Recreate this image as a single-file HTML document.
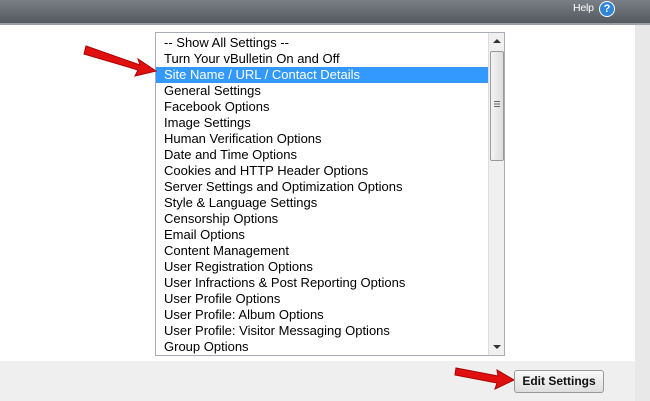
<!DOCTYPE html>
<html><head><style>
body{margin:0;width:650px;height:401px;overflow:hidden;background:#fff;font-family:"Liberation Sans",Arial,sans-serif;position:relative}
.hdr{position:absolute;left:0;top:0;width:650px;height:23px;background:linear-gradient(#7a7e85,#54585f)}
.hl{position:absolute;left:0;top:23px;width:650px;height:2px;background:#9a9ea5}
.help{position:absolute;left:573px;top:2px;color:#fff;font-size:10.5px;letter-spacing:-0.2px}
.q{position:absolute;left:599px;top:1px;width:16px;height:16px;border-radius:50%;background:#2f86d6;border:1px solid #fff;box-sizing:border-box;color:#fff;font-weight:bold;font-size:11px;text-align:center;line-height:14px}
.rs{position:absolute;left:635px;top:25px;width:15px;height:376px;background:#e8e8e8}
.ft{position:absolute;left:0;top:361px;width:635px;height:40px;background:#efefef}
.lb{position:absolute;left:155px;top:32px;width:348px;height:322px;border:1px solid #a8acb3;background:#fff;overflow:hidden}
.it{height:16px;line-height:16px;font-size:13px;padding-left:8px;color:#000;white-space:nowrap}
.sel{background:#3399ff;color:#fff}
.items{position:absolute;left:0;top:2px;width:332px}
.sb{position:absolute;left:332px;top:0;width:16px;height:322px;background:#f0f0f0;border-left:1px solid #ddd}
.th{position:absolute;left:1px;top:18px;width:12px;height:108px;border:1px solid #999;border-radius:2px;background:linear-gradient(90deg,#f4f4f4,#dcdcdc)}
.btn{position:absolute;left:514px;top:370px;width:90px;height:23px;border:1px solid #999;border-radius:3px;box-sizing:border-box;background:linear-gradient(#fafafa,#dedede);font-size:12px;font-weight:bold;color:#111;text-align:center;line-height:21px}
</style></head><body>
<div class="hdr"></div><div class="hl"></div>
<div class="help">Help</div><div class="q">?</div>
<div class="rs"></div>
<div class="ft"></div>
<div class="lb"><div class="items">
<div class="it">-- Show All Settings --</div>
<div class="it">Turn Your vBulletin On and Off</div>
<div class="it sel">Site Name / URL / Contact Details</div>
<div class="it">General Settings</div>
<div class="it">Facebook Options</div>
<div class="it">Image Settings</div>
<div class="it">Human Verification Options</div>
<div class="it">Date and Time Options</div>
<div class="it">Cookies and HTTP Header Options</div>
<div class="it">Server Settings and Optimization Options</div>
<div class="it">Style &amp; Language Settings</div>
<div class="it">Censorship Options</div>
<div class="it">Email Options</div>
<div class="it">Content Management</div>
<div class="it">User Registration Options</div>
<div class="it">User Infractions &amp; Post Reporting Options</div>
<div class="it">User Profile Options</div>
<div class="it">User Profile: Album Options</div>
<div class="it">User Profile: Visitor Messaging Options</div>
<div class="it">Group Options</div>
</div>
<div class="sb">
<svg style="position:absolute;left:4px;top:6px" width="8" height="5"><path d="M0 4L4 0L8 4Z" fill="#333"/></svg>
<div class="th"><svg style="position:absolute;left:3px;top:49px" width="6" height="7"><path d="M0 .5H6M0 3H6M0 5.5H6" stroke="#666"/></svg></div>
<svg style="position:absolute;left:4px;top:312px" width="8" height="5"><path d="M0 0L4 4L8 0Z" fill="#333"/></svg>
</div></div>
<svg style="position:absolute;left:80px;top:38px" width="80" height="40"><path d="M6 8L60 27L58 21L76 33L55 38L58 32L4 16Z" fill="#e01010" stroke="#a00" stroke-width="1"/></svg>
<svg style="position:absolute;left:452px;top:362px" width="66" height="30"><path d="M4 6L46 14L45 8L62 18L43 27L45 21L3 13Z" fill="#e01010" stroke="#a00" stroke-width="1"/></svg>
<div class="btn">Edit Settings</div>
</body></html>
